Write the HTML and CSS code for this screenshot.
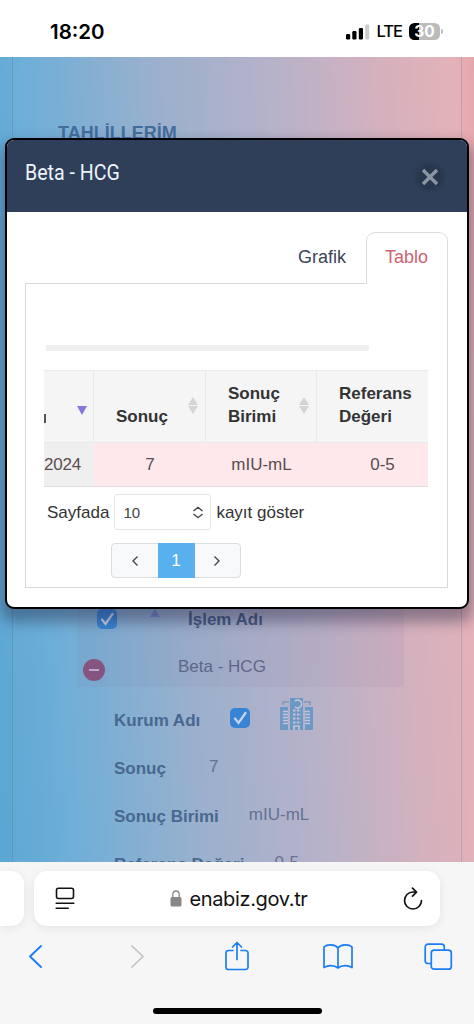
FILE: index.html
```
<!DOCTYPE html>
<html lang="tr">
  <head>
    <meta charset="UTF-8" />
    <meta name="viewport" content="width=device-width, initial-scale=1.0" />
    <title>Tahlillerim</title>
    <link rel="stylesheet" href="styles.css">
  </head>
  <body>
    <!-- status bar -->
    <div class="status">
      <span class="clock">18:20</span>
      <svg class="signal" width="24" height="16" viewBox="0 0 24 16">
        <rect x="0" y="10" width="4.2" height="5.5" rx="1.2" />
        <rect x="6.3" y="7" width="4.2" height="8.5" rx="1.2" />
        <rect x="12.8" y="4" width="4.2" height="11.5" rx="1.2" />
        <rect x="19.2" y="0.5" width="4" height="15" rx="1.2" fill="#ccc" />
      </svg>
      <span class="lte">LTE</span>
      <div class="battery">30</div>
    </div>

    <!-- page -->
    <div class="page">
      <div class="card">
        <h2 class="page-title">TAHLİLLERİM</h2>
        <div class="list">
          <div class="list-head">
            <span class="check"><svg width="20" height="20" viewBox="0 0 20 20"><path d="M5 10.5l3.500 4.500 7-10" /></svg></span>
            <i class="up"></i>
            <b>İşlem Adı</b>
          </div>
          <div class="list-row">
            <span class="minus"></span>
            <span>Beta - HCG</span>
          </div>
        </div>
        <div class="detail">
          <b>Kurum Adı</b>
          <span class="check"><svg width="20" height="20" viewBox="0 0 20 20"><path d="M5 10.500l3.500 4.500 7-10" /></svg></span>
          <svg class="hospital" width="33" height="33" viewBox="0 0 33 33">
            <path fill="#6b98c4" d="M10 0h13v32H10zM0 9h8v23H0zM25 9h8v23h-8z" />
            <path fill="none" stroke="#8297b8" stroke-width="1.600" d="M3 7V4h6M30 7V4h-6" />
            <path fill="none" stroke="#d0c5d8" stroke-width="1.600" d="M15 3a4 4 0 1 1 0 6" />
            <path fill="none" stroke="#c9c1d6" stroke-width="1.800" stroke-dasharray="2.500 1.300" d="M13 12.500h8M13 16.500h8M13 20.500h8M13 24.500h8" />
            <path fill="none" stroke="#c9c1d6" stroke-width="1.700" d="M3 13.500h5M3 16.500h5M3 19.500h5M3 22.500h5M3 25.500h5M25 13.500h5M25 16.500h5M25 19.500h5M25 22.500h5M25 25.500h5M14 32v-4h5v4" />
          </svg>
        </div>
        <div class="detail"><b>Sonuç</b><span class="gap-s">7</span></div>
        <div class="detail"><b>Sonuç Birimi</b><span>mIU-mL</span></div>
        <div class="detail"><b>Referans Değeri</b><span>0-5</span></div>
      </div>

      <!-- modal -->
      <div class="modal">
        <div class="modal-head">
          <h1>Beta - HCG</h1>
          <button class="close"><svg width="18" height="18" viewBox="0 0 18 18"><path d="M2 2l14 14M16 2L2 16" /></svg></button>
        </div>
        <div class="tabs">
          <a class="tab">Grafik</a>
          <a class="tab active">Tablo</a>
        </div>
        <div class="panel">
          <div class="scrollbar"></div>
          <div class="table">
            <div class="th first"><span class="cut"></span><i class="down"></i></div>
            <div class="th">Sonuç<i class="sort"></i></div>
            <div class="th">Sonuç<br>Birimi<i class="sort"></i></div>
            <div class="th">Referans<br>Değeri</div>
            <div class="td date">2024</div>
            <div class="td">7</div>
            <div class="td">mIU-mL</div>
            <div class="td ref">0-5</div>
          </div>
          <div class="length">
            <span>Sayfada</span>
            <div class="select">10
              <svg width="12" height="13" viewBox="0 0 12 13"><path d="M1.500 5L6 1.300 10.500 5M1.500 8L6 11.700 10.500 8" /></svg>
            </div>
            <span>kayıt göster</span>
          </div>
          <div class="pager">
            <span><svg width="8" height="12" viewBox="0 0 8 12"><path d="M6.500 1.500L2 6l4.500 4.500" /></svg></span>
            <span class="current">1</span>
            <span><svg width="8" height="12" viewBox="0 0 8 12"><path d="M1.500 1.500L6 6l-4.500 4.500" /></svg></span>
          </div>
        </div>
      </div>
    </div>

    <!-- browser bar -->
    <div class="browser">
      <div class="address-row">
        <div class="prev-tab"></div>
        <div class="address">
          <svg width="20" height="23" viewBox="0 0 20 23" stroke="#111" fill="none" stroke-width="1.600" stroke-linecap="round">
            <rect x="1.500" y="1.200" width="17" height="10.300" rx="2" />
            <path d="M1.200 16.300h17.600M1.200 21.300h12" />
          </svg>
          <div class="url">
            <svg width="12" height="17" viewBox="0 0 12 17">
              <rect x="0.500" y="7" width="11" height="9.500" rx="1.500" fill="#888" />
              <path d="M2.800 8V4.500a3.200 3.500 0 0 1 6.400 0V8" fill="none" stroke="#888" stroke-width="1.300" />
            </svg>
            <span>enabiz.gov.tr</span>
          </div>
          <svg class="reload" width="20" height="24" viewBox="0 0 20 24" stroke="#111" fill="none" stroke-width="1.700" stroke-linecap="round" stroke-linejoin="round">
            <path d="M13 5H10a8.500 8.500 0 1 0 8.500 8.500M9.500 1.200l4 3.900-4 4" />
          </svg>
        </div>
      </div>
      <div class="tools">
        <svg width="30" height="32" viewBox="0 0 30 32"><path d="M20 6L9 16.500 20 27" stroke-width="1.900" /></svg>
        <svg class="off" width="30" height="32" viewBox="0 0 30 32"><path d="M10 6l11 10.500L10 27" /></svg>
        <svg width="30" height="32" viewBox="0 0 30 32"><path d="M11 10.500H6.500a2.500 2.500 0 0 0-2.500 2.500v14a2.500 2.500 0 0 0 2.500 2.500h17a2.500 2.500 0 0 0 2.500-2.500V13a2.500 2.500 0 0 0-2.500-2.500H19M15 19.500V2.500M10.500 7L15 2.500 19.500 7" /></svg>
        <svg width="30" height="32" viewBox="0 0 30 32"><path d="M15 8c-3-4-11-4-14-1v20.500c4-2.500 10-2.500 14 .5 4-3 10-3 14-.5V7C26 4 18 4 15 8zv20" /></svg>
        <svg width="30" height="32" viewBox="0 0 30 32"><path d="M8 23.500H5a2.800 2.800 0 0 1-2.800-2.800V7A2.800 2.800 0 0 1 5 4.200h13.500A2.800 2.800 0 0 1 21.300 7v3" /><rect x="8.300" y="10.200" width="20" height="19" rx="2.800" /></svg>
      </div>
      <div class="home"></div>
    </div>
  </body>
</html>
```
FILE: styles.css
```
* {
  box-sizing: border-box;
}
body,
h1,
h2 {
  margin: 0;
}
body {
  display: flex;
  flex-direction: column;
  height: 1024px;
  overflow: hidden;
  font: 17px/23px "Liberation Sans", Arial, sans-serif;
  background: #fff;
}
svg {
  display: block;
  flex: none;
}

/* status bar */
.status {
  display: flex;
  align-items: center;
  height: 57px;
  padding: 6px 32px 0 50px;
  font-family: Inter, sans-serif;
  color: #000;
}
.clock {
  flex: 1;
  font-size: 20.5px;
  font-weight: 600;
}
.signal {
  margin-right: 7px;
}
.lte {
  font-size: 16.5px;
  font-weight: 500;
  margin-right: 7px;
  letter-spacing: -1px;
}
.battery {
  position: relative;
  width: 31px;
  height: 17px;
  margin-right: 2px;
  border-radius: 5.5px;
  background: linear-gradient(90deg, #000 10px, #bbb 10px);
  color: #fff;
  font-size: 15.5px;
  line-height: 17px;
  font-weight: 700;
  text-align: center;
}
.battery::after {
  content: "";
  position: absolute;
  right: -3px;
  top: 6px;
  width: 2px;
  height: 5px;
  border-radius: 0 2px 2px 0;
  background: #bbb;
}

/* page behind the modal */
.page {
  position: relative;
  height: 805px;
  padding: 0 12px;
  overflow: hidden;
  background: linear-gradient(86.5deg, #5ba6d3 0%, #69add8 12%, #9bafcd 39%, #b8b1c9 61%, #d8b0bc 82%, #e8b1b7 96%, #e5a5ab 100%);
}
.card {
  height: 805px;
  border: solid rgba(70, 90, 120, 0.2);
  border-width: 0 1px;
  background: rgba(160, 195, 220, 0.05);
}
.page-title {
  height: 547px;
  padding: 65px 0 0 45px;
  font-size: 18px;
  color: #436e9c;
}
.list {
  width: 327px;
  height: 83px;
  margin-left: 64px;
  background: rgba(125, 100, 140, 0.07);
  color: #5e6687;
}
.list-head {
  display: flex;
  align-items: center;
  height: 35px;
  padding: 0 0 5px 20px;
  color: #45587e;
}
.check {
  width: 20px;
  height: 20px;
  border-radius: 5px;
  background: #3784d4;
}
.check path {
  fill: none;
  stroke: #cbd5ed;
  stroke-width: 2.2;
  stroke-linecap: round;
}
.up {
  margin: -12px 28px 0 33px;
  border: 5px solid transparent;
  border-top: 0;
  border-bottom: 8px solid #7583c5;
}
.list-row {
  display: flex;
  align-items: center;
  height: 48px;
  padding: 7px 0 0 6px;
}
.minus {
  display: flex;
  align-items: center;
  justify-content: center;
  width: 22px;
  height: 22px;
  margin: 6px 73px 0 0;
  border-radius: 50%;
  background: #85547f;
}
.minus::before {
  content: "";
  width: 10px;
  height: 2px;
  background: #bea9c9;
}
.detail {
  display: flex;
  align-items: center;
  height: 48px;
  padding-left: 101px;
  color: #667193;
}
.detail:nth-of-type(2) {
  height: 55px;
  padding-top: 7px;
}
.detail b {
  margin: 4px 30px 0 0;
  color: #48688f;
}
.detail .gap-s {
  margin-left: 13px;
}
.hospital {
  margin: -7px 0 0 30px;
}

/* modal */
.modal {
  position: absolute;
  left: 5px;
  top: 81px;
  width: 464px;
  height: 471px;
  border: 2px solid #000;
  border-radius: 9px;
  background: #fff;
  box-shadow: 0 9px 14px 4px rgba(30, 30, 60, 0.4);
}
.modal-head {
  display: flex;
  justify-content: space-between;
  height: 72px;
  padding: 20px 21px 0 18px;
  border-radius: 7px 7px 0 0;
  background: #2f3f5a;
}
.modal-head h1 {
  font: 400 22px/26px Roboto, sans-serif;
  color: #eef3fa;
  transform: scaleX(0.89);
  transform-origin: 0 50%;
}
.close {
  display: flex;
  align-items: center;
  justify-content: center;
  width: 34px;
  height: 34px;
  margin-right: -1px;
  padding: 0;
  border: 0;
  border-radius: 50%;
  background: radial-gradient(#28374e 45%, #2f3f5a 70%);
}
.close path {
  stroke: #8a95a3;
  stroke-width: 3.4;
}
.tabs {
  display: flex;
  justify-content: flex-end;
  margin: 20px 19px 0 0;
}
.tab {
  height: 52px;
  padding: 14px 20px 0 0;
  font-size: 18px;
  color: #3c4358;
}
.tab.active {
  z-index: 1;
  width: 82px;
  padding: 13px 0 0 18px;
  border: 1px solid #ddd;
  border-bottom: 0;
  border-radius: 9px 9px 0 0;
  background: #fff;
  color: #cf6270;
}
.panel {
  width: 423px;
  height: 305px;
  margin: -1px 0 0 18px;
  padding: 61px 19px 0 18px;
  border: 1px solid #d8d8d8;
}
.scrollbar {
  width: 323px;
  height: 6px;
  margin-left: 2px;
  border-radius: 1px 1px 4px 1px;
  background: #efefef;
}
.table {
  display: grid;
  grid-template-columns: 50px 112px 111px 111px;
  grid-template-rows: 73px 44px;
  width: 384px;
  margin-top: 19px;
}
.th {
  display: flex;
  position: relative;
  align-items: flex-end;
  padding: 0 0 14px 22px;
  border: solid #e8eaea;
  border-width: 1px 1px 1px 0;
  background: #f5f5f6;
  color: #333;
  font-weight: bold;
}
.th:nth-child(4) {
  border-right: 0;
}
.th.first {
  padding-left: 0;
}
/* tail of the scrolled header text */
.cut {
  width: 2px;
  height: 9px;
  margin-bottom: 5px;
  background: #555;
}
.down {
  margin: 0 0 13px 31px;
  border: 5px solid transparent;
  border-bottom: 0;
  border-top: 9px solid #8379dc;
}
/* sort arrows */
.sort {
  position: absolute;
  right: 7px;
  top: 26px;
}
.sort::before,
.sort::after {
  content: "";
  display: block;
  border: 5px solid transparent;
  border-top: 0;
  border-bottom: 8px solid #d5d5d5;
}
.sort::after {
  margin-top: 1px;
  transform: scaleY(-1);
}
.td {
  display: flex;
  align-items: center;
  justify-content: center;
  border-bottom: 1px solid #e3dcde;
  background: #fee8ec;
  color: #5c4c50;
}
.td.date {
  justify-content: flex-start;
  background: #efefef;
  letter-spacing: -0.2px;
}
.td.ref {
  padding-left: 20px;
}
.length {
  display: flex;
  align-items: center;
  gap: 5px;
  margin: 7px 0 0 3px;
  color: #333;
}
.select {
  display: flex;
  align-items: center;
  justify-content: space-between;
  width: 97px;
  height: 36px;
  padding: 0 6px 0 8px;
  border: 1px solid #e6e6e6;
  border-radius: 3px;
  font-size: 15px;
  color: #444;
}
.select path,
.pager path {
  fill: none;
  stroke: #444;
  stroke-width: 1.4;
}
.pager {
  display: flex;
  width: 130px;
  height: 35px;
  margin: 13px 0 0 67px;
  border: 1px solid #dadfe2;
  border-radius: 4px;
  background: #f7f9fa;
}
.pager span {
  display: flex;
  flex: 1;
  align-items: center;
  justify-content: center;
}
.pager .current {
  flex: 0 0 37px;
  margin: -1px 0;
  background: #59b0ef;
  color: #fff;
}

/* browser bar */
.browser {
  display: flex;
  flex-direction: column;
  align-items: center;
  height: 162px;
  background: #f6f6f6;
}
.address-row {
  display: flex;
  gap: 10px;
  width: 474px;
  padding-top: 9px;
}
.prev-tab,
.address {
  height: 55px;
  background: #fff;
  box-shadow: 0 2px 10px rgba(0, 0, 0, 0.08);
}
.prev-tab {
  width: 24px;
  border-radius: 0 13px 13px 0;
}
.address {
  display: flex;
  align-items: center;
  justify-content: space-between;
  width: 406px;
  padding: 0 17px 0 21px;
  border-radius: 13px;
}
.url {
  display: flex;
  align-items: center;
  gap: 7px;
  font: 20px/26px Inter, sans-serif;
  letter-spacing: -0.35px;
  color: #111;
}
.tools {
  display: flex;
  justify-content: space-between;
  width: 432px;
  margin-top: 14px;
}
.tools svg {
  fill: none;
  stroke: #1b7df5;
  stroke-width: 1.7;
  stroke-linecap: round;
  stroke-linejoin: round;
}
.tools .off {
  stroke: #c3c3c6;
}
.home {
  width: 169px;
  height: 6px;
  margin-top: 36px;
  border-radius: 3px;
  background: #000;
}
```
